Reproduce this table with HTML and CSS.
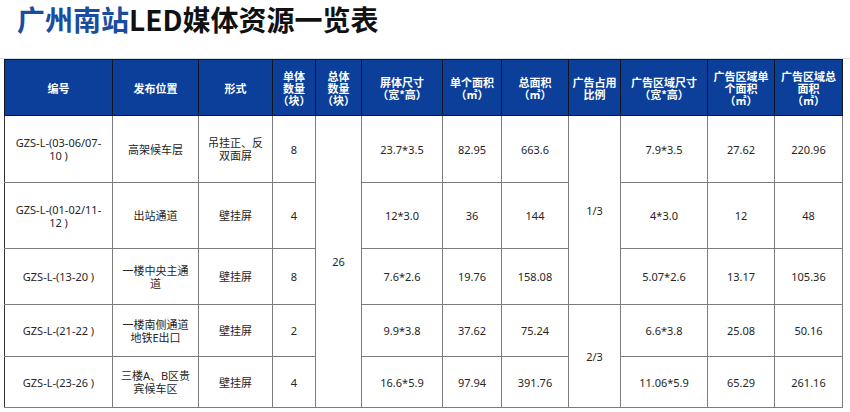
FILE: index.html
```html
<!DOCTYPE html>
<html lang="zh-CN">
<head>
<meta charset="utf-8">
<title>广州南站LED媒体资源一览表</title>
<link rel="stylesheet" href="styles.css">
</head>
<body>
<h1 class="title"><span class="title-blue">广州南站</span>LED媒体资源一览表</h1>
<table class="media">
  <colgroup>
    <col class="w108"><col class="w86"><col class="w74"><col class="w43"><col class="w46"><col class="w81">
    <col class="w59"><col class="w67"><col class="w52"><col class="w87"><col class="w67"><col class="w68">
  </colgroup>
  <thead>
    <tr class="head">
      <th>编号</th>
      <th>发布位置</th>
      <th>形式</th>
      <th>单体<br>数量<br>（块）</th>
      <th>总体<br>数量<br>（块）</th>
      <th>屏体尺寸<br>（宽*高）</th>
      <th>单个面积<br>（㎡）</th>
      <th>总面积<br>（㎡）</th>
      <th>广告占用<br>比例</th>
      <th>广告区域尺寸<br>（宽*高）</th>
      <th>广告区域单<br>个面积<br>（㎡）</th>
      <th>广告区域总<br>面积<br>（㎡）</th>
    </tr>
  </thead>
  <tbody>
    <tr class="r1">
      <td>GZS-L-(03-06/07-<br>10 )</td>
      <td>高架候车层</td>
      <td>吊挂正、反<br>双面屏</td>
      <td>8</td>
      <td rowspan="5">26</td>
      <td>23.7*3.5</td>
      <td>82.95</td>
      <td>663.6</td>
      <td rowspan="3">1/3</td>
      <td>7.9*3.5</td>
      <td>27.62</td>
      <td>220.96</td>
    </tr>
    <tr class="r2">
      <td>GZS-L-(01-02/11-<br>12 )</td>
      <td>出站通道</td>
      <td>壁挂屏</td>
      <td>4</td>
      <td>12*3.0</td>
      <td>36</td>
      <td>144</td>
      <td>4*3.0</td>
      <td>12</td>
      <td>48</td>
    </tr>
    <tr class="r3 dark-top">
      <td>GZS-L-(13-20 )</td>
      <td>一楼中央主通<br>道</td>
      <td>壁挂屏</td>
      <td>8</td>
      <td>7.6*2.6</td>
      <td>19.76</td>
      <td>158.08</td>
      <td>5.07*2.6</td>
      <td>13.17</td>
      <td>105.36</td>
    </tr>
    <tr class="r4">
      <td>GZS-L-(21-22 )</td>
      <td>一楼南侧通道<br>地铁E出口</td>
      <td>壁挂屏</td>
      <td>2</td>
      <td>9.9*3.8</td>
      <td>37.62</td>
      <td>75.24</td>
      <td rowspan="2">2/3</td>
      <td>6.6*3.8</td>
      <td>25.08</td>
      <td>50.16</td>
    </tr>
    <tr class="r5 dark-top">
      <td>GZS-L-(23-26 )</td>
      <td>三楼A、B区贵<br>宾候车区</td>
      <td>壁挂屏</td>
      <td>4</td>
      <td>16.6*5.9</td>
      <td>97.94</td>
      <td>391.76</td>
      <td>11.06*5.9</td>
      <td>65.29</td>
      <td>261.16</td>
    </tr>
  </tbody>
</table>
</body>
</html>
```
FILE: styles.css
```css
html, body {
  margin: 0;
  padding: 0;
  background: #ffffff;
}

body {
  font-family: "Noto Sans", "Noto Sans CJK SC", sans-serif;
  color: #222222;
}

.title {
  margin: 0;
  height: 59px;
  box-sizing: border-box;
  padding-left: 17px;
  font-family: "Noto Sans CJK SC", sans-serif;
  font-size: 28px;
  line-height: 38px;
  font-weight: 700;
  color: #111111;
  border-bottom: 1px solid #d9dce4;
}

.title-blue {
  color: #1a4c9f;
}

.media {
  margin-left: 4px;
  border-collapse: collapse;
  table-layout: fixed;
  width: 839px;
  font-size: 11px;
}

.w108 { width: 108px; }
.w86 { width: 86px; }
.w74 { width: 74px; }
.w43 { width: 43px; }
.w46 { width: 46px; }
.w81 { width: 81px; }
.w59 { width: 59px; }
.w67 { width: 67px; }
.w52 { width: 52px; }
.w87 { width: 87px; }
.w68 { width: 68px; }

.media th {
  background: #0b3f9a;
  color: #ffffff;
  font-family: "Noto Sans CJK SC", sans-serif;
  font-weight: 700;
  font-size: 11px;
  line-height: 12px;
  border: 1px solid #10151f;
  padding: 0;
  text-align: center;
  vertical-align: middle;
}

.head {
  height: 56px;
}

.media td {
  border: 1px solid #7c7c7c;
  padding: 0;
  text-align: center;
  vertical-align: middle;
  line-height: 13px;
  color: #262626;
}

.media tbody tr td:first-child {
  border-left-color: #333333;
}

.dark-top td {
  border-top-color: #1e1e1e;
}

.r1 { height: 67px; }
.r2 { height: 66px; }
.r3 { height: 56px; }
.r4 { height: 52px; }
.r5 { height: 51px; }
```
